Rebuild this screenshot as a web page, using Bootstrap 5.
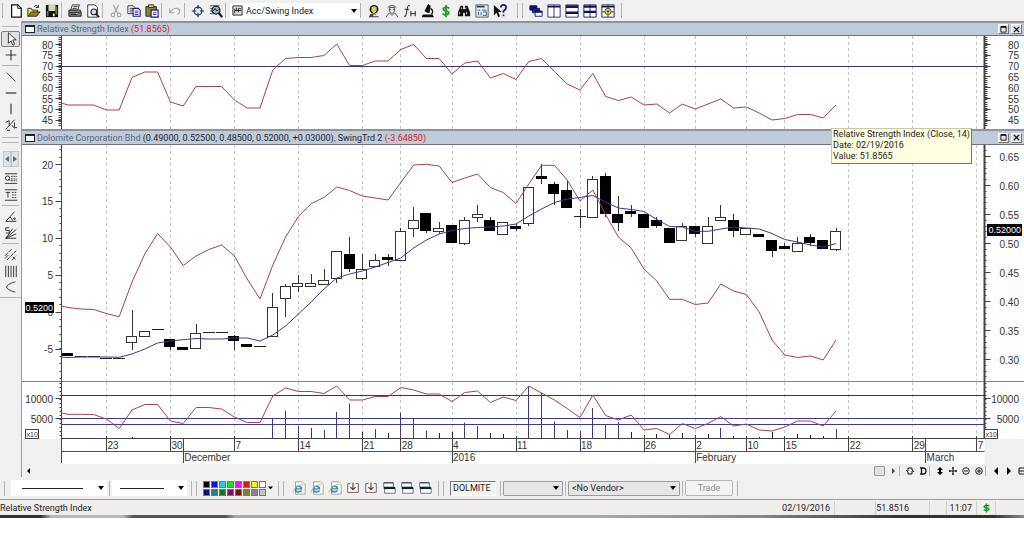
<!DOCTYPE html>
<html lang="en">
<head>
<meta charset="utf-8">
<meta name="viewport" content="width=device-width, initial-scale=1">
<title>Dolomite Corporation Bhd</title>
<link rel="stylesheet" href="https://cdn.jsdelivr.net/npm/bootstrap@5.3.0/dist/css/bootstrap.min.css">
<style>
  :root { --face:#f0f0f0; --rule:#8a8a8a; --soft:#b4b4b4; --ui:Roboto,"Open Sans",sans-serif; --plot:"Liberation Sans",Arial,sans-serif; }
  body { font-family:var(--ui); font-size:9px; line-height:12px; color:#222; background:#fff; }
  .toolstrip { background:var(--face); }
  .strip-top { height:21px; padding-left:2px; }
  .strip-bottom { height:23px; padding-left:2px; border-bottom:1px solid #9a9a9a; }
  .tool { width:18px; height:18px; padding:0; border:0; background:none; display:flex; align-items:center; justify-content:center; flex:none; color:#111; }
  .tool svg, .side-tool svg { width:14px; height:14px; display:block; }
  .tool-narrow { width:8px; }
  .divide { flex:none; width:5px; height:15px; border-left:1px solid var(--soft); margin:0; }
  .strip-bottom .divide { width:3px; margin-left:2px; }
  .scroller .divide { width:4px; height:10px; }
  .combo { height:16px; background:#fff; flex:none; }
  .combo select, .plain-select { border:0; outline:0; appearance:none; font:inherit; color:inherit; padding:0 12px 0 3px; height:100%; min-width:0;
    background:url("data:image/svg+xml,%3Csvg xmlns='http://www.w3.org/2000/svg' width='7' height='4'%3E%3Cpath d='M0 0h6L3 4z'/%3E%3C/svg%3E") right 2px center no-repeat; }
  .combo-index { width:130px; padding-left:2px; } .combo-index svg { width:11px; height:11px; }
  .combo-line { width:96px; } .combo-dash { width:75px; }
  .combo-line select { background-image:url("data:image/svg+xml,%3Csvg xmlns='http://www.w3.org/2000/svg' width='7' height='4'%3E%3Cpath d='M0 0h6L3 4z'/%3E%3C/svg%3E"),linear-gradient(#222,#222); background-position:right 2px center,11px center; background-size:7px 4px,61px 1px; background-repeat:no-repeat; }
  .combo-dash select { background-image:url("data:image/svg+xml,%3Csvg xmlns='http://www.w3.org/2000/svg' width='7' height='4'%3E%3Cpath d='M0 0h6L3 4z'/%3E%3C/svg%3E"),linear-gradient(#222,#222); background-position:right 2px center,8px center; background-size:7px 4px,44px 1px; background-repeat:no-repeat; }
  .strip-bottom .plain-select { height:15px; border:1px solid #9c9c9c; border-radius:1px; background-color:#e6e6e6; }
  .side { width:22px; background:var(--face); flex:none; border-right:1px solid #9a9a9a; padding-top:3px; }
  .side-tool { width:19px; height:16px; padding:0; border:1px solid transparent; background:none; display:flex; align-items:center; justify-content:center; color:#222; }
  .side-tool.pressed { border-color:#7c7c7c; border-radius:2px; background:#e2e2e2; }
  .side-step { width:8px; height:16px; padding:0; border:1px solid #c3c7cb; background:#dfe3e6; display:flex; align-items:center; justify-content:center; }
  .side-step svg { width:4px; height:6px; }
  .side-rule { width:17px; border-top:1px solid var(--soft); margin:2px 0 3px; }
  .pane-title { height:15px; border-top:2px solid #8b949d; border-bottom:1px solid #6d7378; background:#bfcbd8; padding-left:3px; color:#56697c; }
  .pane-title .doc { width:10px; height:8px; border:1px solid #222; border-top-width:2px; background:#fff; margin-right:2px; }
  .win { width:11px; height:10px; padding:0; border:1px solid #777; border-top-color:#fff; border-left-color:#fff; background:#e4e4e4; margin-right:2px; display:flex; align-items:center; justify-content:center; }
  .win svg { width:7px; height:7px; }
  .tall { height:16px; }
  .red { color:#d8232f; } .dark { color:#1d2733; }
  .chart { display:block; width:100%; font-family:var(--plot); font-size:10px; fill:#333; background:#fff; }
  .h-rsi { height:93px; } .h-price { height:235px; } .h-vol { height:84px; }
  .hint { top:-1px; right:52px; background:#ffffe1; border:1px solid #c9c9a6; border-right-color:#777; border-bottom-color:#777; color:#222; padding:0 1px 1px; line-height:11px; }
  .scroller { height:13px; background:var(--face); padding-left:3px; overflow:hidden; }
  .nav-tool { width:13px; height:12px; padding:0; border:0; background:none; color:#111; display:flex; flex:none; align-items:center; justify-content:center; }
  .nav-tool svg { width:8px; height:8px; }
  .nav-last { width:9px; }
  .thumb { width:11px; height:10px; border:1px solid #999; border-radius:1px; background:#e0e0e0; margin-right:1px; }
  .palette { display:grid; grid-template-columns:repeat(8,7px); gap:1px; }
  .palette button { width:7px; height:7px; padding:0; border:1px solid #777; }
  .symbol { width:46px; height:15px; font:inherit; padding:0 2px; border:1px solid #fff; border-top-color:#777; border-left-color:#777; background:#f4f4f4; color:#222; }
  .trade { width:48px; height:16px; font:inherit; padding:0; border:1px solid #b5b5b5; border-radius:2px; background:#f3f3f3; color:#8b8b8b; }
  .status { height:15px; background:#f0eded; color:#222; }
  .status .cell { height:14px; border-right:1px solid #d4d0d0; line-height:15px; text-align:right; }
  .desk-edge { height:3px; background:linear-gradient(90deg,#333 0 4%,#b7b7b7 5% 12%,#555 13% 22%,#aaa 23% 58%,#888 74%,#333 88% 97%,#888); }
</style>
</head>
<body>
<header class="toolstrip strip-top d-flex align-items-center">
  <div class="divide"></div>
  <button class="tool" aria-label="New"><svg viewBox="0 0 16 16"><path d="M3 1h7l4 4v10H3z" fill="#fff" stroke="#111" stroke-width="1.4"/><path d="M10 1v4h4" fill="none" stroke="#111"/></svg></button>
  <button class="tool" aria-label="Open"><svg viewBox="0 0 16 16"><path d="M1 14V5h4l1 2h6v3" fill="#f6e04a" stroke="#222"/><path d="M1 14l4-5h10l-4 5z" fill="#8a8420" stroke="#222"/><path d="M8 3q3-3 5 1m0-3v3h-3" fill="none" stroke="#222"/></svg></button>
  <button class="tool" aria-label="Save"><svg viewBox="0 0 16 16"><path d="M1 1h14v14H1z" fill="#111"/><path d="M4 1h8v7H4z" fill="#d8d8c0"/><path d="M2 8h2v6H2zM12 3h2v9h-2z" fill="#75752a"/><path d="M9 11h2v3H9z" fill="#fff"/></svg></button>
  <div class="divide"></div>
  <button class="tool" aria-label="Print"><svg viewBox="0 0 16 16"><path d="M5 1h8l-2 6H3z" fill="#fff" stroke="#222"/><path d="M1 7h13l1 2v5H1z" fill="#888" stroke="#111"/><path d="M2 10h12M3 12h8M6 3h5M5 5h5" stroke="#222"/><path d="M9 11h2" stroke="#ee0"/></svg></button>
  <button class="tool" aria-label="Print preview"><svg viewBox="0 0 16 16"><path d="M2 1h8l3 3v11H2z" fill="#fff" stroke="#222"/><circle cx="9" cy="9" r="3.3" fill="#bfe4ea" stroke="#222" stroke-width="1.3"/><path d="M11 11l4 4" stroke="#222" stroke-width="2"/></svg></button>
  <div class="divide"></div>
  <button class="tool" aria-label="Cut"><svg viewBox="0 0 16 16" fill="none" stroke="#a5a5a5" stroke-width="1.3"><path d="M5 1l5 10M11 1L6 11"/><circle cx="4.500" cy="12.500" r="2"/><circle cx="11.500" cy="12.500" r="2"/></svg></button>
  <button class="tool" aria-label="Copy"><svg viewBox="0 0 16 16"><path d="M1 2h6l2 2v7H1z" fill="#fff" stroke="#223"/><path d="M3 5h4M3 7h4M3 9h3" stroke="#334"/><path d="M7 5h6l2 2v7H7z" fill="#fff" stroke="#1a1a8c" stroke-width="1.3"/><path d="M9 8h4M9 10h4M9 12h4" stroke="#1a1a8c"/></svg></button>
  <button class="tool" aria-label="Paste"><svg viewBox="0 0 16 16"><path d="M1 3h12v11H1z" fill="#8a8430" stroke="#222"/><path d="M4 1h6v3H4z" fill="#e8d850" stroke="#222"/><path d="M7 7h8v8H7z" fill="#fff" stroke="#1a1a8c" stroke-width="1.3"/><path d="M9 10h4M9 12h4" stroke="#1a1a8c"/></svg></button>
  <div class="divide"></div>
  <button class="tool" aria-label="Undo"><svg viewBox="0 0 16 16" fill="none" stroke="#a5a5a5" stroke-width="1.4"><path d="M2 5v5h5M2 10q4-6 9-5 5 3 0 7"/></svg></button>
  <div class="divide"></div>
  <button class="tool" aria-label="Crosshair"><svg viewBox="0 0 16 16" fill="none" stroke="#1c2c6c" stroke-width="1.3"><circle cx="8" cy="8" r="4.500"/><path d="M8 1v5M8 10v5M1 8h5M10 8h5"/></svg></button>
  <button class="tool" aria-label="Zoom"><svg viewBox="0 0 16 16"><path d="M1 2h11M1 5h4M1 8h3M1 11h5" stroke="#444"/><circle cx="8" cy="7" r="4.500" fill="#8fb8b8" stroke="#222" stroke-width="1.5"/><path d="M5 8l2-3 2 3 2-2" stroke="#111" fill="none"/><path d="M11 10l4 5" stroke="#111" stroke-width="2.4"/></svg></button>
  <div class="divide"></div>
  <div class="combo combo-index d-flex align-items-center"><svg viewBox="0 0 12 12"><path d="M1 1h10v10H1z" fill="#ddd" stroke="#222"/><path d="M3 9V4m2 3V3m2 5V4h3M3 6h7" stroke="#222" fill="none"/></svg><select class="flex-grow-1" aria-label="Indicator"><option>Acc/Swing Index</option></select></div>
  <div class="divide"></div>
  <button class="tool" aria-label="System tester"><svg viewBox="0 0 16 16"><circle cx="8" cy="6" r="5" fill="#111"/><path d="M5 4q3-3 6 0v4l-3 3-3-3z" fill="#d9d060"/><path d="M2 15l2-4h6l4 4z" fill="#444"/><path d="M7 12h6v2H7z" fill="#eee"/></svg></button>
  <button class="tool" aria-label="Expert advisor"><svg viewBox="0 0 16 16" fill="none" stroke="#444"><path d="M3 4q5-5 10 0M5 4v4l3 3 3-3V4z"/><path d="M1 15l4-5 3 3 3-3 4 5M5 6h2m2 0h2"/></svg></button>
  <button class="tool" aria-label="Indicator builder"><svg viewBox="0 0 16 16" fill="none" stroke="#222" stroke-width="1.1"><path d="M8 2Q5 1 5 5L3 14H1M2 6h5M9 8v6m5-6v6M9 11h5"/></svg></button>
  <button class="tool" aria-label="Explorer"><svg viewBox="0 0 16 16"><path d="M8 0l3 2-1 8H7L4 8zM2 12h11l2 3H1z" fill="#111"/><path d="M11 5q4 3 1 7" fill="none" stroke="#111" stroke-width="1.500"/></svg></button>
  <button class="tool" aria-label="Quotes"><svg viewBox="0 0 16 16" fill="none" stroke="#159a25" stroke-width="2"><path d="M12 5Q8 2 5 5q-1 2 3 3t3 3q-3 3-7 0M8 1v14"/></svg></button>
  <button class="tool" aria-label="Find"><svg viewBox="0 0 16 16"><path d="M4 2h3v4h2V2h3l3 8v4H9v-4H7v4H1v-4z" fill="#111"/><path d="M3 9v3M11 9v3M5 4v2M10 4v2" stroke="#ddd"/></svg></button>
  <button class="tool" aria-label="Report"><svg viewBox="0 0 16 16"><path d="M1 1h14v14H1z" fill="#e8eef4" stroke="#456"/><path d="M2 3h9" stroke="#246" stroke-width="2"/><path d="M3 7h3M8 7h5M4 9v4m3-4v4m2-4h4v4H9" stroke="#357" fill="none"/></svg></button>
  <button class="tool" aria-label="Context help"><svg viewBox="0 0 16 16"><path d="M1 1v12l3-3 2 5 2-1-2-5h4z" fill="#111"/><path d="M9 4q0-3 3-3t3 3q0 2-3 4v2m0 2v2" fill="none" stroke="#1a1a8c" stroke-width="2"/></svg></button>
  <div class="divide ms-2"></div><div class="divide"></div>
  <button class="tool" aria-label="Cascade"><svg viewBox="0 0 16 16" stroke="#10105c"><path d="M1 2h8v5H1z" fill="#10106c"/><path d="M4 5h8v5H4z" fill="#20209c"/><path d="M7 8h8v6H7z" fill="#fff"/><path d="M7 9h8" stroke-width="2"/></svg></button>
  <button class="tool" aria-label="Tile columns"><svg viewBox="0 0 16 16"><path d="M1 1h14v14H1zM8 1v14" fill="#fff" stroke="#222a5c"/><path d="M1 3h14" stroke="#10106c" stroke-width="2"/></svg></button>
  <button class="tool" aria-label="Tile rows"><svg viewBox="0 0 16 16"><path d="M1 1h14v14H1z" fill="#fff" stroke="#222a5c"/><path d="M1 3h14M1 10h14" stroke="#10106c" stroke-width="3"/></svg></button>
  <button class="tool" aria-label="Tile grid"><svg viewBox="0 0 16 16"><path d="M1 1h14v14H1zM8 1v14" fill="#fff" stroke="#10106c"/><path d="M1 3h14M1 9h14" stroke="#10106c" stroke-width="2.500"/></svg></button>
  <button class="tool" aria-label="Layout options"><svg viewBox="0 0 16 16"><path d="M1 1h14v14H1zM8 1v14M1 9h14" fill="#fff" stroke="#222"/><path d="M1 3h14" stroke="#10106c" stroke-width="2"/><circle cx="8" cy="8.500" r="3.500" fill="#f4e23a" stroke="#333"/><circle cx="8" cy="8.500" r="1.300" fill="#333"/></svg></button>
  <div class="divide ms-1"></div>
</header>

<main class="d-flex">
  <nav class="side d-flex flex-column align-items-center" aria-label="Drawing tools">
    <div class="side-rule mb-1"></div>
    <button class="side-tool pressed" aria-label="Select"><svg viewBox="0 0 16 16"><path d="M5 1v12l3-3 2 5 2-1-2-5h4z" fill="#fff" stroke="#222"/></svg></button>
    <button class="side-tool" aria-label="Crosshair"><svg viewBox="0 0 16 16"><path d="M8 2v12M2 8h12" stroke="#333" stroke-width="1.300"/></svg></button>
    <div class="side-rule"></div>
    <button class="side-tool" aria-label="Trendline"><svg viewBox="0 0 16 16"><path d="M3 3l10 10" stroke="#333"/></svg></button>
    <button class="side-tool" aria-label="Horizontal line"><svg viewBox="0 0 16 16"><path d="M2 8h12" stroke="#222" stroke-width="1.300"/></svg></button>
    <button class="side-tool" aria-label="Vertical line"><svg viewBox="0 0 16 16"><path d="M8 2v12" stroke="#333" stroke-width="1.300"/></svg></button>
    <button class="side-tool" aria-label="Fibonacci"><svg viewBox="0 0 16 16" fill="none" stroke="#222"><path d="M2 13L12 2M2 5l4-2v6M9 8l3 4m0-7v6h3M3 14h4"/></svg></button>
    <div class="side-rule mb-0 mt-1"></div><div class="side-rule mt-1 mb-1"></div>
    <div class="d-flex my-1">
      <button class="side-step" aria-label="Previous tools"><svg viewBox="0 0 4 6"><path d="M4 0v6L0 3z" fill="#667"/></svg></button>
      <button class="side-step" aria-label="Next tools"><svg viewBox="0 0 4 6"><path d="M0 0v6l4-3z" fill="#667"/></svg></button>
    </div>
    <button class="side-tool" aria-label="Quadrant lines"><svg viewBox="0 0 16 16" fill="none" stroke="#222"><path d="M1 2h14M1 13h14"/><path d="M8 5h7M8 8h7M8 10h7" stroke-dasharray="2 1"/><circle cx="4" cy="7" r="2.500"/><path d="M5 8l2 2"/></svg></button>
    <button class="side-tool" aria-label="Text retracement"><svg viewBox="0 0 16 16" fill="none" stroke="#222"><path d="M1 2h14M1 14h14"/><path d="M9 5h6M9 8h6M9 11h6" stroke-dasharray="2 1"/><path d="M2 5h5M4.500 5v6"/></svg></button>
    <div class="side-rule"></div>
    <button class="side-tool" aria-label="Gann line"><svg viewBox="0 0 16 16" fill="none" stroke="#222"><path d="M12 2L2 13h12M7 8l3 4"/><circle cx="12" cy="10" r="1"/></svg></button>
    <button class="side-tool" aria-label="Speed lines"><svg viewBox="0 0 16 16" fill="none" stroke="#222"><path d="M6 2H2v3h4v3H2M2 14L14 4M2 14l12-5M2 14l8-11M2 14h12"/></svg></button>
    <div class="side-rule"></div>
    <button class="side-tool" aria-label="Pitchfork"><svg viewBox="0 0 16 16" fill="none" stroke="#222"><path d="M1 9l8-8M3 14L14 3M9 14l5-5" stroke-dasharray="5 1"/><path d="M1 12l4-4M10 10l3 3"/></svg></button>
    <button class="side-tool" aria-label="Time zones"><svg viewBox="0 0 16 16" fill="none" stroke="#222"><path d="M2 2v13M5 2v13M8 2v13M11 2v13M14 2v13"/></svg></button>
    <button class="side-tool" aria-label="Arc"><svg viewBox="0 0 16 16" fill="none" stroke="#222"><path d="M13 2Q-7 8 13 14"/></svg></button>
    <div class="side-rule w-100"></div>
  </nav>

  <div class="flex-grow-1" style="min-width:0">
    <section>
      <div class="pane-title d-flex align-items-center"><span class="doc"></span><span>Relative Strength Index <span class="red">(51.8565)</span></span>
        <button class="win ms-auto" aria-label="Maximize"><svg viewBox="0 0 8 8"><path d="M1 1h6v6H1z" fill="none" stroke="#111"/><path d="M1 1h6" stroke="#111" stroke-width="2"/></svg></button><button class="win" aria-label="Close"><svg viewBox="0 0 8 8"><path d="M1 1l6 6M7 1L1 7" stroke="#111" stroke-width="1.500"/></svg></button></div>
      <svg id="rsi" class="chart h-rsi" role="img" aria-label="Relative Strength Index chart"></svg>
    </section>
    <section class="position-relative">
      <div class="pane-title tall d-flex align-items-center"><span class="doc"></span><span>Dolomite Corporation Bhd <span class="dark">(0.49000, 0.52500, 0.48500, 0.52000, +0.03000)</span>, <span class="dark">SwingTrd 2</span> <span class="red">(-3.64850)</span></span>
        <button class="win ms-auto" aria-label="Maximize"><svg viewBox="0 0 8 8"><path d="M1 1h6v6H1z" fill="none" stroke="#111"/><path d="M1 1h6" stroke="#111" stroke-width="2"/></svg></button><button class="win" aria-label="Close"><svg viewBox="0 0 8 8"><path d="M1 1l6 6M7 1L1 7" stroke="#111" stroke-width="1.500"/></svg></button></div>
      <svg id="price" class="chart h-price" role="img" aria-label="Dolomite price chart"></svg>
      <div class="hint position-absolute text-nowrap" role="tooltip">Relative Strength Index (Close, 14)<br>Date: 02/19/2016<br>Value: 51.8565</div>
    </section>
    <svg id="vol" class="chart h-vol" role="img" aria-label="Volume chart and dates"></svg>
    <div class="scroller d-flex align-items-center">
      <button class="nav-tool w-auto me-auto" aria-label="Scroll left"><svg viewBox="0 0 8 8"><path d="M5 1v6L2 4z"/></svg></button>
      <span class="thumb"></span>
      <button class="nav-tool" aria-label="Scroll right"><svg viewBox="0 0 8 8"><path d="M3 1v6l3-3z" fill="#444"/></svg></button>
      <div class="divide"></div>
      <button class="nav-tool" aria-label="Refresh"><svg viewBox="0 0 8 8" fill="none" stroke="#111"><path d="M6 3V1H2v3M2 5v2h4V4M0 3l2 2M8 5L6 3"/></svg></button>
      <button class="nav-tool" aria-label="Daily"><svg viewBox="0 0 8 8" fill="none" stroke="#111" stroke-width="1.300"><path d="M1 1h3q3 0 3 3T4 7H1M2.500 1v6"/></svg></button>
      <div class="divide"></div>
      <button class="nav-tool" aria-label="Fit vertical"><svg viewBox="0 0 8 8"><path d="M4 0l3 3H5v2h2L4 8 1 5h2V3H1z"/></svg></button>
      <button class="nav-tool" aria-label="Move"><svg viewBox="0 0 8 8"><path d="M4 0v8M0 4h8M3 1h2M3 7h2M1 3v2M7 3v2" stroke="#111"/></svg></button>
      <button class="nav-tool" aria-label="Zoom out"><svg viewBox="0 0 8 8" fill="none" stroke="#222"><circle cx="4" cy="4" r="3.300"/><path d="M2 4h4"/></svg></button>
      <button class="nav-tool" aria-label="Zoom in"><svg viewBox="0 0 8 8" fill="none" stroke="#222"><circle cx="4" cy="4" r="3.300"/><path d="M2 4h4M4 2v4"/></svg></button>
      <div class="divide"></div>
      <button class="nav-tool" aria-label="Previous security"><svg viewBox="0 0 8 8"><path d="M6 0v8L2 4z"/></svg></button>
      <button class="nav-tool" aria-label="Next security"><svg viewBox="0 0 8 8"><path d="M2 0v8l4-4z"/></svg></button>
      <button class="nav-tool nav-last" aria-label="Layout"><svg viewBox="0 0 8 8" fill="none" stroke="#111"><path d="M8 1H3v6h5M3 4h5"/></svg></button>
    </div>
  </div>
</main>

<div class="toolstrip strip-bottom d-flex align-items-center">
  <div class="divide me-1"></div>
  <div class="combo combo-line"><select class="w-100" aria-label="Line style"><option></option></select></div>
  <div class="divide"></div>
  <div class="combo combo-dash"><select class="w-100" aria-label="Line weight"><option></option></select></div>
  <div class="divide ms-1"></div><div class="divide me-1"></div>
  <div class="palette" id="palette"></div>
  <button class="tool tool-narrow" aria-label="More colors"><svg viewBox="0 0 5 5" style="width:5px"><path d="M0 1h5L2.500 4z"/></svg></button>
  <div class="divide ms-1"></div><div class="divide me-1"></div>
  <div class="d-flex" id="webTools"></div>
  <div class="divide ms-1"></div><div class="divide me-1"></div>
  <input class="symbol" aria-label="Symbol" value="DOLMITE">
  <div class="divide ms-1"></div>
  <select class="plain-select" style="width:60px" aria-label="Account"><option></option></select>
  <div class="divide"></div>
  <select class="plain-select" style="width:112px" aria-label="Vendor"><option>&lt;No Vendor&gt;</option></select>
  <div class="divide"></div>
  <button class="trade" disabled>Trade</button>
  <div class="divide ms-1"></div>
</div>
<footer class="status d-flex align-items-center">
  <span class="me-auto">Relative Strength Index</span>
  <span class="cell pe-1">02/19/2016</span>
  <span class="cell" style="width:41px"></span>
  <span class="cell" style="width:54px;padding-right:20px">51.8516</span>
  <span class="cell" style="width:17px"></span>
  <span class="cell pe-1" style="width:30px">11:07</span>
  <span class="cell d-flex align-items-center justify-content-center" style="width:19px"><svg width="9" height="10" viewBox="0 0 16 16" fill="none" stroke="#159a25" stroke-width="2.500"><path d="M13 5Q8 1 4 5q-1 2 4 3t4 3q-3 3-9 0M8 0v16"/></svg></span>
  <span style="width:28px"></span>
</footer>
<div class="desk-edge"></div>

<script src="https://cdn.jsdelivr.net/npm/bootstrap@5.3.0/dist/js/bootstrap.bundle.min.js"></script>
<script>
// One entry per trading day; heights share one vertical scale that runs down all three charts.
const rsi = [105,105,105,110,110,77.5,72,72,102,106,86.5,86.5,86.5,100,108,108,70,58.5,57.5,57.5,55.5,44,65.5,65.5,61,61,49.5,44.5,58.5,58.5,74,63,61,78,73.5,79.5,61.5,58.5,71.5,84,90,73.5,96.5,100.5,97,105,104,113,104,109,104,99,108,107,113,120,118.5,114.5,114.5,118,105];
const swing = [307.5,309,309.5,313.5,316.7,282,254,233.5,247,265.5,256,249.5,245,256,279,299,265,237,216.5,203.5,197.5,187,190.5,196,198,200,182.5,165,164.3,166,182.5,178,174,187.5,192.5,203.5,184,165.3,165.3,180,201,190,214.5,237,248,269,281,299.3,299.3,304.5,303,284,291,294.5,312,340,355,357.5,356,360,340];
const mean = [357.5,357,357,357,357.3,354,349,343,341,339.7,338.5,339,339,338,338,341,335,326,314,302,289,278,274,271,267,262.5,258,248,240,234,230.5,228.5,227.5,227,226,224,216,209,202.5,199,197.5,195.5,202,208,209.5,211.5,219.5,226.5,227,231.3,231.3,229,227,228,229,233.5,239.5,242,245,247,243.5];
const flow = [414.3,414.3,414.5,419,428.5,410,404.5,404.5,421,423.5,407.5,407.5,409,417,422.5,422.5,396,388,391.5,391.5,393.5,386,400,400,396.5,396.5,387.5,390,394,394,401.5,392.5,391,402.5,397,400.5,386,393,400,408.5,417.5,395,415.5,420,415,430,428.5,434.5,423.5,428.5,423.5,416.5,426,424,430,431,427,421,421,426,411];
const volume = {5:437,10:438,16:419,17:410.5,18:426,19:428,20:430,21:412,22:403.5,23:432,24:429,25:433,26:412.5,27:419,28:430.5,29:433,30:432,31:422.5,32:426,33:433,34:434,35:436,36:386.5,37:393,38:421.5,39:430,40:431,41:408,42:425,43:422,44:432,45:435,46:434,47:435,48:433,49:435,50:434,51:428,52:436,54:437,55:432,56:436,57:434,58:435,59:436,60:429};
// high, body top, body bottom, low, filled
const candles = [[353,353,356,356,1],[356,356,356,356],[356,356,356,356],[358,358,358,358],[358,358,358,358],[310,336,342,350],[331,331,336,336],[329,329,329,329],[339,339,347,350,1],[347,347,350,350,1],[324,333,348,348],[332,332,332,332],[332,332,332,332],[335,336,341,350,1],[344,344,347,347,1],[346,346,346,346],[293,307,336,336],[284,286,298,317],[275,283,286,292],[274,283,286,286],[269,280,284,284],[251,251,278,283],[237,254,269,272,1],[254,269,278,280],[254,260,266,266],[254,257,260,266,1],[228,231,260,260],[207,220,228,237],[213,213,231,233,1],[222,228,231,234],[225,225,243,243,1],[217,220,243,245],[205,214,217,222],[217,220,231,231,1],[222,222,234,234],[224,226,229,231,1],[187,187,223,226],[164,176,179,184,1],[182,184,194,205,1],[181,190,208,208,1],[209,216,216,228],[176,179,217,217],[173,176,214,217,1],[196,214,223,231,1],[205,211,214,217,1],[214,214,228,228,1],[217,220,226,228,1],[228,228,243,243,1],[223,226,240,240],[226,226,234,237,1],[217,226,243,243],[205,217,220,220],[214,220,231,237,1],[228,228,234,234],[234,234,237,237,1],[240,240,251,257,1],[243,246,249,249,1],[237,243,251,251],[234,237,243,246,1],[240,240,249,249,1],[228,231,249,251]];
const weeks = [[3,'23'],[8,'30'],[13,'7'],[18,'14'],[23,'21'],[26,'28'],[30,'4'],[35,'11'],[40,'18'],[45,'26'],[49,'2'],[53,'10'],[56,'15'],[61,'22'],[66,'29'],[71,'7']];
const months = [[9,'December'],[30,'2016'],[49,'February'],[67,'March']];
const RED = '#a8434b', BLUE = '#3a3a94', GUTTER = 40;

const line = (x1,y1,x2,y2,c='#444',more='') => `<path d="M${x1} ${y1}L${x2} ${y2}" stroke="${c}" fill="none" ${more}/>`;
const label = (x,y,s,anchor='end',c='#333',size=10) => `<text x="${x}" y="${y}" text-anchor="${anchor}" fill="${c}" font-size="${size}">${s}</text>`;
const crisp = v => Math.floor(v) + .5;

function draw() {
  const width = document.getElementById('rsi').clientWidth;
  const right = width - GUTTER + .5, left = GUTTER - .5;
  const k = (right - left) / 923;
  const X = i => GUTTER + (6 + 12.8 * i) * k;
  const curve = (ys, c, lead) => `<path fill="none" stroke="${c}" d="M${left} ${lead} L${ys.map((y,i) => X(i).toFixed(1) + ' ' + y).join(' ')}"/>`;
  const grid = (a,b) => weeks.map(w => line(crisp(X(w[0])),a,crisp(X(w[0])),b,'#c4c4c4','stroke-dasharray="3 3"')).join('');
  const ticks = (side, from, to, step, len) => { let s = ''; const x = side < 0 ? left : right;
    for (let y = from; y < to; y += step) s += line(x,crisp(y),x + side*len,crisp(y)); return s; };
  const put = (id, top, h, body) => { const el = document.getElementById(id); el.setAttribute('viewBox', `0 ${top} ${width} ${h}`); el.innerHTML = body; };
  const walls = (a,b) => line(left,a,left,b,'#444') + line(right,a,right,b,'#444','stroke-width="2"');

  let s = grid(36,129) + walls(36,129) + ticks(-1,37,128,2.17,3) + ticks(1,37,128,2.17,3);
  for (let n = 0; n < 8; n++) { const y = 44.5 + n*10.8; s += ticks(-1,y,y+1,9,6) + ticks(1,y,y+1,9,6) + label(31,Math.round(y+4),80-5*n) + label(width-5,Math.round(y+4),80-5*n); }
  s += line(left,66.5,right,66.5,'#34347c') + curve(rsi,RED,103);
  put('rsi',36,93,s);

  s = grid(145,380) + walls(145,380) + ticks(-1,149.7,379,7.38,2) + ticks(1,150.700,379,5.8,2);
  for (let n = 0; n < 6; n++) { const y = 164.5 + n*36.9; s += ticks(-1,y,y+1,9,6) + label(31,Math.round(y+4),20-5*n); }
  for (let n = 0; n < 8; n++) { const y = 156.5 + n*29; s += ticks(1,y,y+1,9,6) + label(width-5,Math.round(y+4),(.65-.05*n).toFixed(2)); }
  candles.forEach(([hi,a,b,lo,full],i) => { const x = crisp(X(i)-5.5), m = crisp(X(i));
    s += (hi < a ? line(m,hi,m,a,'#333') : '') + (lo > b ? line(m,b,m,lo,'#333') : '');
    if (a === b) s += line(x-.5,a+.5,x+11.5,a+.5,'#222');
    else s += `<rect x="${x}" y="${a+.5}" width="10" height="${full ? b-a-1 : b-a}" fill="${full ? '#000' : '#fff'}" stroke="${full ? '#000' : '#333'}"/>`; });
  s += curve(mean,BLUE,357) + curve(swing,RED,306);
  s += `<rect x="3" y="302" width="29" height="11" fill="#000"/>` + label(31,311,'0.5200','end','#fff',9);
  s += `<rect x="${width-37}" y="224" width="35" height="12" fill="#000"/>` + label(width-3,233,'0.52000','end','#fff',9);
  put('price',145,235,s);

  s = line(0,381.5,width,381.5,'#888') + `<rect y="439" width="${left}" height="26" fill="#f0f0f0"/><rect x="${right}" y="439" width="40" height="26" fill="#f0f0f0"/>`;
  s += grid(382,439) + walls(380,439) + line(left,439,left,463) + ticks(-1,383,438,4,2) + ticks(1,383,438,4,2);
  [[398.5,'10000'],[418.5,'5000']].forEach(([y,t]) => s += ticks(-1,y,y+1,9,6) + ticks(1,y,y+1,9,6) + label(31,y+4.5,t) + label(width-5,y+4.5,t));
  s += line(left,395.5,right,395.5,'#34347c') + line(left,418.5,right,418.5,BLUE) + line(left,424.5,right,424.5,BLUE);
  for (const i in volume) s += line(crisp(X(+i)),volume[i],crisp(X(+i)),439,volume[i] > 431 ? '#223' : BLUE);
  s += curve(flow,RED,413) + line(left,438.5,right,438.5,'#444') + line(left,451.5,right,451.5,'#555');
  weeks.forEach(([i,t]) => s += line(crisp(X(i)),436,crisp(X(i)),451) + label(X(i)+1,449,t,'start'));
  months.forEach(([i,t]) => s += line(crisp(X(i)),i === 9 || i === 67 ? 439 : 451,crisp(X(i)),463) + label(X(i)+1,461,t,'start'));
  [3.5,width-39.5].forEach(x => s += `<rect x="${x}" y="429.500" width="13" height="9" fill="#fff" stroke="#444"/><text x="${x+1}" y="437" font-size="7">x10</text>`);
  put('vol',380,84,s);
}
draw();
addEventListener('resize', draw);

const colors = ['#000','#1414c8','#20d0e0','#20e020','#e020e0','#e01818','#f4f420','#fff','#101078','#208080','#107820','#701070','#781010','#808020','#888','#c4c4c4'];
document.getElementById('palette').innerHTML = colors.map(c => `<button aria-label="Color ${c}" style="background:${c}"></button>`).join('');
const art = {
  page: '<path d="M4 1h8l3 3v11H4z" fill="#fff" stroke="#998"/><path d="M11 11q-4 3-7 0 0-6 4-5 3 1 3 3H5" fill="none" stroke="#2a86c8" stroke-width="1.700"/><path d="M1 13Q4 4 13 4" fill="none" stroke="#c9b84a"/>',
  load: '<path d="M5 3H2v10h12V3h-3" fill="#fff" stroke="#644"/><path d="M8 2v7M5 7l3 3 3-3" fill="none" stroke="#822" stroke-width="1.300"/>',
  pane: '<path d="M2 2h11v5H2zM3 8h12v6H3z" fill="#fff" stroke="#567"/><path d="M2 2h11" stroke="#456" stroke-width="1.500"/><path d="M2 8h13" stroke="#13203c" stroke-width="2.500"/>'
};
document.getElementById('webTools').innerHTML = ['page','page','page','load','load','pane','pane','pane'].map((n,i) => `<button class="tool" aria-label="Web tool ${i+1}"><svg viewBox="0 0 16 16">${art[n]}</svg></button>`).join('');
</script>
</body>
</html>
